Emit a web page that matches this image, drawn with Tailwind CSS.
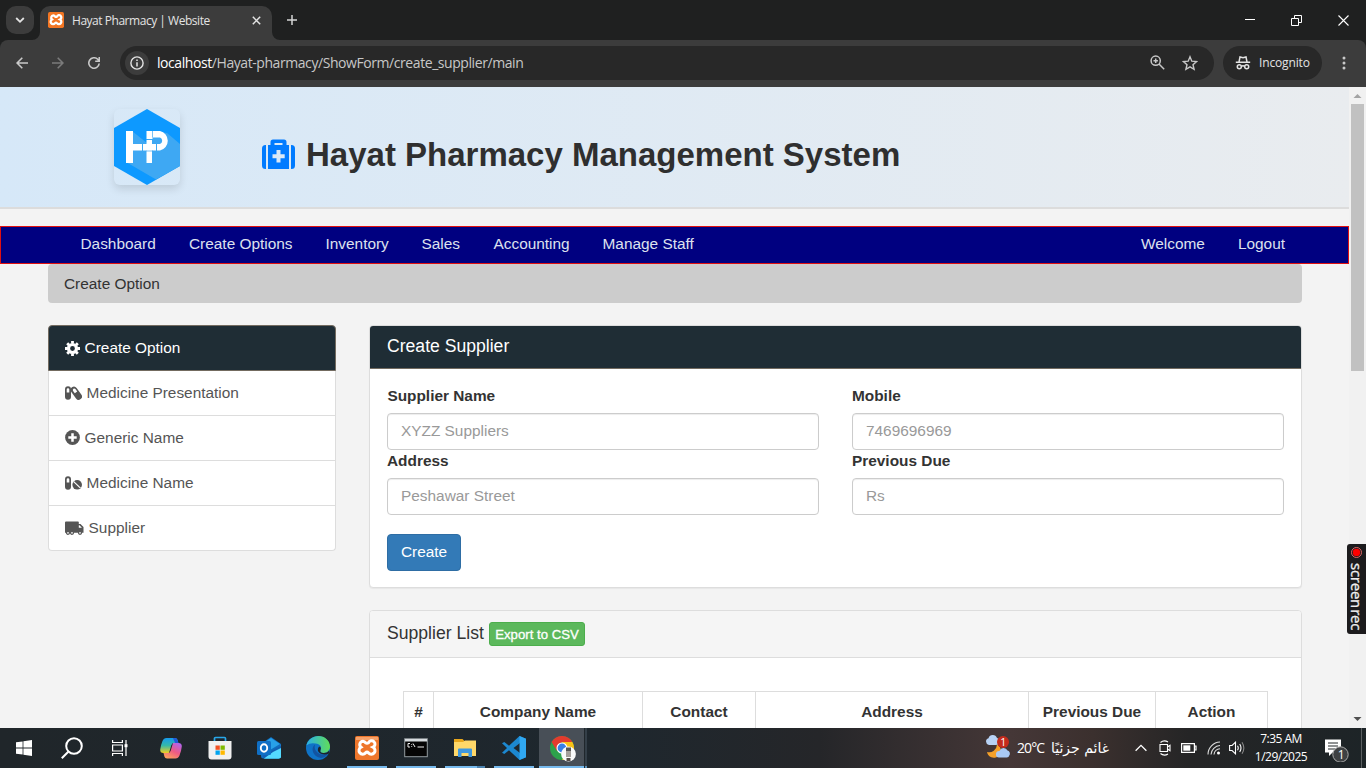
<!DOCTYPE html>
<html lang="en">
<head>
<meta charset="utf-8">
<title>Hayat Pharmacy | Website</title>
<script src="https://cdn.jsdelivr.net/npm/@tailwindcss/browser@4"></script>
</head>
<body class="w-[1366px] h-[768px] overflow-hidden flex flex-col bg-[#f3f3f3] font-['Liberation_Sans',Arial,sans-serif] text-[15.4px] leading-[22px] text-[#333]">

<!-- Tab strip -->
<div class="h-10 shrink-0 flex bg-[#1f2020] font-['Open_Sans','Noto_Sans',sans-serif]">
  <div class="w-7 h-7 mt-1.5 ml-1.5 rounded-[10px] bg-[#3c3c3c] flex items-center justify-center">
    <svg width="10" height="8" viewBox="0 0 10 8" fill="none" stroke="#e3e3e3" stroke-width="1.8"><path d="M1.2 2l3.8 3.8L8.8 2"/></svg>
  </div>
  <div class="relative ml-1.5 mt-1.5 w-[232px] h-[34px] rounded-t-[10px] bg-[#3c3c3c] flex items-center">
    <svg class="absolute -left-2 bottom-0" width="8" height="8"><path d="M8 0v8H0a8 8 0 0 0 8-8" fill="#3c3c3c"/></svg>
    <svg class="absolute -right-2 bottom-0" width="8" height="8"><path d="M0 0v8h8a8 8 0 0 1-8-8" fill="#3c3c3c"/></svg>
    <svg class="ml-2 mb-1.5" width="16" height="16" viewBox="0 0 24 24"><rect width="24" height="24" rx="2.5" fill="#f37623"/><path d="M8 5.200a3.400 3.400 0 0 0-2 6 3.700 3.700 0 1 0 4.500 5.700q1.500-1.500 3 0a3.700 3.700 0 1 0 4.500-5.700 3.400 3.400 0 1 0-4.500-4.500q-1.500 1-3 0A3.400 3.400 0 0 0 8 5.200z" fill="none" stroke="#fff" stroke-width="3.400"/></svg>
    <span class="ml-2 mb-[5px] w-[172px] whitespace-nowrap text-[12px] tracking-[-0.47px] text-[#e3e3e3]">Hayat Pharmacy | Website</span>
    <svg class="ml-[7.500px] mb-1.5" width="9" height="9" viewBox="0 0 9 9" stroke="#e3e3e3" stroke-width="1.500"><path d="M.8.8l7.400 7.400M8.200.8L.8 8.200"/></svg>
  </div>
  <svg class="ml-[15px] mt-[15px]" width="10" height="10" stroke="#d5d5d5" stroke-width="1.500"><path d="M5 0v10M0 5h10"/></svg>
  <div class="ml-auto flex items-center gap-[36px] pr-[17px]">
    <svg width="10" height="10" stroke="#fff"><path d="M0 4.500h10"/></svg>
    <svg width="11" height="11" fill="none" stroke="#fff"><path d="M.5 3.500h7v7h-7zM3.500 3.500V.5h7v7h-3"/></svg>
    <svg width="11" height="11" stroke="#fff" stroke-width="1.100"><path d="M.5.5l10 10M10.500.5l-10 10"/></svg>
  </div>
</div>

<!-- Toolbar -->
<div class="h-[47px] shrink-0 bg-[#1f2020]">
<div class="h-full rounded-t-lg bg-[#3c3c3c] flex items-center pl-4 pb-px font-['Open_Sans','Noto_Sans',sans-serif]">
  <svg width="12" height="12" viewBox="0 0 12 12" fill="none" stroke="#c9c9c9" stroke-width="1.600"><path d="M12 6H1.200M6.300.8L1.100 6l5.200 5.200"/></svg>
  <svg class="ml-6" width="12" height="12" viewBox="0 0 12 12" fill="none" stroke="#7b7b7b" stroke-width="1.600"><path d="M0 6h10.800M5.700.8L10.900 6l-5.200 5.200"/></svg>
  <svg class="ml-6" width="12" height="12" viewBox="0 0 12 12" fill="none" stroke="#c9c9c9" stroke-width="1.600"><path d="M11.200 6.500a5.200 5.200 0 1 1-1.500-4.200L11.200 4M11.300 0v4.200H7.200"/></svg>
  <div class="ml-5 w-[1094px] h-[34px] rounded-full bg-[#282828] flex items-center pl-[5px]">
    <div class="w-6 h-6 rounded-full bg-[#3c3c3c] flex items-center justify-center"><svg width="14" height="14" viewBox="0 0 14 14"><circle cx="7" cy="7" r="6.100" fill="none" stroke="#e3e3e3" stroke-width="1.400"/><path d="M6.250 6.200h1.500v4.300h-1.500zM6.250 3.600h1.500v1.500h-1.500z" fill="#e3e3e3"/></svg></div>
    <span class="ml-2 mb-px whitespace-nowrap text-[14px] tracking-[-0.43px] text-[#c7c7c7]"><span class="text-white">localhost</span>/Hayat-pharmacy/ShowForm/create_supplier/main</span>
    <svg class="ml-auto mb-px" width="15" height="15" viewBox="0 0 15 15" fill="none" stroke="#c7c7c7" stroke-width="1.500"><circle cx="5.700" cy="5.700" r="4.600"/><path d="M9 9l5.200 5.200M5.700 3.500v4.400M3.500 5.700h4.400"/></svg>
    <svg class="ml-[17px] mr-4 mb-px" width="16" height="16" viewBox="0 0 16 16" fill="none" stroke="#c7c7c7" stroke-width="1.400"><path d="M8 1.800l1.800 4.400 4.800.4-3.600 3.100 1.100 4.700L8 11.900l-4.100 2.500L5 9.700 1.400 6.600l4.800-.4z"/></svg>
  </div>
  <div class="ml-[9px] w-[99px] h-[34px] rounded-full bg-[#282828] flex items-center pl-3">
    <svg width="16" height="16" viewBox="0 0 16 16" fill="none" stroke="#e3e3e3" stroke-width="1.500"><path d="M.8 7.300h14.400M4 7l1-5 3 .8 3-.8 1 5"/><circle cx="4.300" cy="11.700" r="2"/><circle cx="11.700" cy="11.700" r="2"/><path d="M6.300 11.300q1.700-1 3.400 0"/></svg>
    <span class="ml-[8px] text-[12px] tracking-[-0.15px] text-[#e3e3e3]">Incognito</span>
  </div>
  <svg class="ml-5" width="4" height="16" fill="#c9c9c9"><circle cx="2" cy="3" r="1.500"/><circle cx="2" cy="8" r="1.500"/><circle cx="2" cy="13" r="1.500"/></svg>
</div>
</div>

<!-- Viewport -->
<div class="h-[641px] shrink-0 flex overflow-hidden relative">
  <main class="w-[1349px] h-full overflow-hidden bg-[#f3f3f3]">
    <header class="h-[122px] border-b-2 border-[#dcdcdc] bg-linear-to-r from-[#d6e8f8] to-[#e9ecef] flex">
      <div class="ml-[114px] mt-[22px] w-[66px] h-[76px] rounded-md shadow-[0_4px_9px_rgba(0,0,0,0.12)]">
        <svg width="66" height="76" viewBox="0 0 66 76"><path d="M33 0l33 19v38L33 76 0 57V19z" fill="#0d99ff"/><path d="M18 22l15 12 5-12 15 2 13 11v22L42 70.500 12 53z" fill="#3ea8f3"/><g fill="#fff"><path d="M12 22h7v13h9v6.500h-9V54h-7z"/><path d="M29 35h3.500v-4H38v4h4v6.500h-4V54h-5.500V41.500H29z"/><path d="M32.500 22H46a10 10 0 0 1 0 19.500h-3V35h3a3.500 3.500 0 0 0 0-6.500h-7.500V30h-6z"/></g><path d="M32 30.500h7M32 42h7M38.500 22v6.500" stroke="#3ea8f3" stroke-width=".7" fill="none"/></svg>
      </div>
      <div class="ml-[82px] mt-[46px] flex h-[44px] items-center">
        <svg class="-mt-[2px]" width="33" height="30" viewBox="0 0 33 30"><g fill="#007bff"><path d="M4 6v24H3.500A3.500 3.500 0 0 1 0 26.500v-17A3.500 3.500 0 0 1 3.500 6z"/><path d="M29 6v24h.5a3.500 3.500 0 0 0 3.500-3.500v-17A3.500 3.500 0 0 0 29.500 6z"/><path fill-rule="evenodd" d="M6 6h2.500V3A2.500 2.500 0 0 1 11 .5h11A2.500 2.500 0 0 1 24.500 3v3H27v24H6zM12.500 4v2h8V4zM14.500 11v4.200h-4v4h4v4.300h4v-4.300h4.200v-4h-4.200V11z"/></g></svg>
        <h1 class="ml-[11px] whitespace-nowrap text-[33px] font-bold leading-[44px] text-[#2f2f2f]">Hayat Pharmacy Management System</h1>
      </div>
    </header>

    <nav class="mt-[17px] h-[38px] border border-[#e01010] bg-[#000080] flex items-center pl-[79.500px] pr-[63px] pb-[3px] text-[#dde0ee] whitespace-nowrap">
      <a class="w-[108.500px]">Dashboard</a><a class="w-[136.500px]">Create Options</a><a class="w-[96px]">Inventory</a><a class="w-[72px]">Sales</a><a class="w-[109px]">Accounting</a><a>Manage Staff</a>
      <a class="ml-auto">Welcome</a><a class="ml-[33px]">Logout</a>
    </nav>

    <div class="ml-12 w-[1254px] h-[39px] rounded bg-[#ccc] px-4 flex items-center">Create Option</div>

    <div class="ml-12 mt-[22px] flex items-start">
      <aside class="w-72 mr-[33px] rounded text-[#555]">
        <div class="h-[46px] border border-[#736b60] rounded-t bg-[#1f2d35] px-4 flex items-center text-white">
          <svg width="15" height="15" viewBox="0 0 15 15"><circle cx="7.500" cy="7.500" r="4" fill="none" stroke="#fff" stroke-width="3.200"/><g stroke="#fff" stroke-width="2.800"><path d="M7.500 0v2.500M7.500 12.500V15M0 7.500h2.500M12.500 7.500H15M2.200 2.200l1.700 1.700M11.100 11.100l1.700 1.700M2.200 12.800l1.700-1.700M11.100 3.900l1.700-1.700"/></g></svg>
          <span class="ml-[4.600px]">Create Option</span>
        </div>
        <div class="h-[45px] border-x border-b border-[#ddd] bg-white px-4 flex items-center">
          <svg width="17" height="14" viewBox="0 0 17 14"><path fill-rule="evenodd" fill="#555" d="M3 .3a3 3 0 0 1 3 3v7.400a3 3 0 0 1-6 0V3.300a3 3 0 0 1 3-3zM1.700 3.500v3h2.600v-3a1.300 1.300 0 0 0-2.600 0z"/><path fill-rule="evenodd" fill="#555" d="M6.900 1.300a3.300 3.300 0 0 1 4.700.8l4.700 6.300a3.300 3.300 0 0 1-5.300 4L6.300 6a3.300 3.300 0 0 1 .6-4.700zM8.100 4.900l1.700 2.300 2.400-1.700-1.800-2.400c-1.200-1.400-3.200.1-2.300 1.800z"/></svg>
          <span class="ml-[4.600px]">Medicine Presentation</span>
        </div>
        <div class="h-[45px] border-x border-b border-[#ddd] bg-white px-4 flex items-center">
          <svg class="mb-px" width="15" height="15" viewBox="0 0 15 15"><circle cx="7.500" cy="7.500" r="7.400" fill="#555"/><path d="M7.500 3.300v8.400M3.300 7.500h8.400" stroke="#fff" stroke-width="2.500"/></svg>
          <span class="ml-[4.600px]">Generic Name</span>
        </div>
        <div class="h-[45px] border-x border-b border-[#ddd] bg-white px-4 flex items-center">
          <svg width="17" height="14" viewBox="0 0 17 14"><path fill-rule="evenodd" fill="#555" d="M3 .3a3 3 0 0 1 3 3v7.400a3 3 0 0 1-6 0V3.300a3 3 0 0 1 3-3zM1.700 3.500v3h2.600v-3a1.300 1.300 0 0 0-2.600 0z"/><circle cx="12.200" cy="8.800" r="4.800" fill="#555"/><path d="M8.700 5.600l6.800 6.500" stroke="#fff" stroke-width="1.200"/></svg>
          <span class="ml-[4.600px]">Medicine Name</span>
        </div>
        <div class="h-[45px] border-x border-b border-[#ddd] rounded-b bg-white px-4 flex items-center">
          <svg width="19" height="14" viewBox="0 0 19 14"><path fill-rule="evenodd" fill="#555" d="M1 .5h12a.8.8 0 0 1 .8.800V3h1.700l3 3v5.800H0V1.500q0-1 1-1zM13.800 4.200v2.600h3.100l-2.400-2.600z"/><g fill="#fff" stroke="#555" stroke-width="1.300"><circle cx="3" cy="11.800" r="1.500"/><circle cx="7" cy="11.800" r="1.500"/><circle cx="15" cy="11.800" r="1.500"/></g></svg>
          <span class="ml-[4.600px]">Supplier</span>
        </div>
      </aside>

      <section class="w-[933px]">
        <div class="h-[263px] border border-[#ddd] rounded bg-white shadow-[0_1px_1px_rgba(0,0,0,0.05)]">
          <div class="h-[43px] rounded-t-[3px] border-b border-[#736b60] bg-[#1f2d35] px-[17px] pb-[2px] flex items-center text-[17.600px] text-white">Create Supplier</div>
          <form class="px-[17px] pt-4 grid grid-cols-[432px_432px] gap-x-[33px]">
            <label class="flex flex-col font-bold"><span class="h-7 pl-[0.4px]">Supplier Name</span><input class="h-[37px] border border-[#ccc] rounded px-[13px] pb-px bg-white font-normal placeholder:text-[#999] shadow-[inset_0_1px_1px_rgba(0,0,0,0.075)]" placeholder="XYZZ Suppliers"></label>
            <label class="flex flex-col font-bold"><span class="h-7">Mobile</span><input class="h-[37px] border border-[#ccc] rounded px-[13px] pb-px bg-white font-normal placeholder:text-[#999] shadow-[inset_0_1px_1px_rgba(0,0,0,0.075)]" placeholder="7469696969"></label>
            <label class="flex flex-col font-bold"><span class="h-7">Address</span><input class="h-[37px] border border-[#ccc] rounded px-[13px] pb-px bg-white font-normal placeholder:text-[#999] shadow-[inset_0_1px_1px_rgba(0,0,0,0.075)]" placeholder="Peshawar Street"></label>
            <label class="flex flex-col font-bold"><span class="h-7">Previous Due</span><input class="h-[37px] border border-[#ccc] rounded px-[13px] pb-px bg-white font-normal placeholder:text-[#999] shadow-[inset_0_1px_1px_rgba(0,0,0,0.075)]" placeholder="Rs"></label>
            <button type="button" class="mt-[19px] w-[74px] h-[37px] rounded border border-[#2e6da4] bg-[#337ab7] pb-px text-white">Create</button>
          </form>
        </div>

        <div class="mt-[22px] h-[300px] border border-[#ddd] rounded bg-white">
          <div class="h-[47px] rounded-t-[3px] border-b border-[#ddd] bg-[#f5f5f5] px-[17px] flex items-center text-[17.600px]"><span class="mb-[3px] w-[102px] whitespace-nowrap">Supplier List</span><span class="w-24 h-6 rounded-[3px] border border-[#4cae4c] bg-[#5cb85c] text-white text-[13.200px] leading-[23px] text-center whitespace-nowrap [-webkit-text-stroke:0.3px_white]">Export to CSV</span></div>
          <table class="ml-[33px] mt-[33px] w-[865px] table-fixed border-collapse text-center">
            <tr class="h-[41px]">
              <th class="border border-[#ddd] w-[30px]">#</th><th class="border border-[#ddd] w-[209px]">Company Name</th><th class="border border-[#ddd] w-[113px]">Contact</th><th class="border border-[#ddd] w-[273px]">Address</th><th class="border border-[#ddd] w-[127px] whitespace-nowrap">Previous Due</th><th class="border border-[#ddd] w-[112px]">Action</th>
            </tr>
          </table>
        </div>
      </section>
    </div>
  </main>

  <!-- Scrollbar -->
  <div class="w-[17px] h-full bg-[#f1f1f1] flex flex-col items-center">
    <svg width="17" height="17"><path d="M4.500 11h8L8.500 7z" fill="#a3a3a3"/></svg>
    <div class="w-[13px] h-[267px] bg-[#c1c1c1]"></div>
    <svg class="mt-auto" width="17" height="17"><path d="M4.500 6h8l-4 4z" fill="#505050"/></svg>
  </div>

  <!-- Recorder badge -->
  <div class="absolute left-[1347px] top-[457px] w-[19px] h-[90px] rounded-l-[3px] bg-[#1c1b1d] flex flex-col items-center">
    <svg class="mt-[3px] shrink-0" width="11" height="11"><circle cx="5.500" cy="5.500" r="5" fill="none" stroke="#d66"/><circle cx="5.500" cy="5.500" r="3.700" fill="#f00"/></svg>
    <span class="mt-[5px] [writing-mode:vertical-rl] font-['Open_Sans',sans-serif] text-[15px] leading-[18px] tracking-[-0.25px] [word-spacing:-2.500px] whitespace-nowrap text-[#eee] [-webkit-text-stroke:0.3px_#eee]">screen rec</span>
  </div>
</div>

<!-- Taskbar -->
<div class="h-10 shrink-0 flex bg-[linear-gradient(90deg,#20262a_0,#1e272e_45%,#252629_60%,#453737_74%,#3b302e_80%,#252526_87%,#1d2427_100%)] text-white font-['Open_Sans','Noto_Sans',sans-serif]">
  <div class="w-12 flex items-center justify-center"><svg width="16" height="16" viewBox="0 0 16 16" fill="#fff"><path d="M0 2.300l6.600-.9v6.200H0zM7.400 1.300L16 0v7.600H7.400zM0 8.400h6.600v6.200L0 13.700zM7.400 8.400H16V16l-8.600-1.200z"/></svg></div>
  <div class="w-12 flex items-center justify-center"><svg width="22" height="22" viewBox="0 0 22 22" fill="none" stroke="#fff" stroke-width="2"><circle cx="13" cy="9" r="7.800"/><path d="M7.300 14.700L.8 21.300"/></svg></div>
  <div class="w-12 flex items-center justify-center"><svg width="16" height="16" viewBox="0 0 16 16" fill="none" stroke="#fff" stroke-width="1.200"><path d="M.6 0v2.500h9.800V0M.6 5h9.800v6H.6zM.6 16v-2.500h9.800V16M14 0v16"/><path d="M12.500 4.200h3v3h-3z" fill="#fff" stroke="none"/></svg></div>
  <div class="w-[2.500px]"></div>
  <div class="w-[49px] flex items-center justify-center">
    <svg width="24" height="22" viewBox="0 0 24 22"><defs><linearGradient id="ca" x1="0" y1="0" x2="0" y2="1"><stop offset="0" stop-color="#169bee"/><stop offset=".5" stop-color="#35b9a8"/><stop offset="1" stop-color="#f2cf20"/></linearGradient><linearGradient id="cb" x1=".8" y1="0" x2=".2" y2="1"><stop offset="0" stop-color="#b264ec"/><stop offset=".5" stop-color="#ee5a83"/><stop offset="1" stop-color="#ffa55a"/></linearGradient></defs><path d="M7.500 1H16q2 0 2.600 2l.8 3H15q-2 0-2.700 2.300L10 16H4.500Q1 16 1.200 12.500q.4-4 2.300-8.500Q4.700 1 7.500 1z" fill="url(#ca)"/><path d="M14 1h2q2 0 2.600 2l.9 3.500h-3.200z" fill="#2357d8"/><path d="M16.500 21.500H8q-2 0-2.600-2l-.9-3.500H9q2 0 2.700-2.300L14 6h5.500q3.500 0 3.300 3.500-.4 4-2.300 9-1.200 3-4 3z" fill="url(#cb)"/></svg>
  </div>
  <div class="w-[49px] flex items-center justify-center">
    <svg width="24" height="24" viewBox="0 0 24 24"><path d="M6.500 6V2.500q0-1 1-1h9q1 0 1 1V6" fill="none" stroke="#28a8ea" stroke-width="1.700"/><path d="M.5 5h23v15.500q0 3-3 3h-17q-3 0-3-3z" fill="#f0f0f0"/><path d="M7.500 9.500h4.300v4.300H7.500z" fill="#f25022"/><path d="M12.500 9.500h4.300v4.300h-4.300z" fill="#7fba00"/><path d="M7.500 14.500h4.300v4.300H7.500z" fill="#00a4ef"/><path d="M12.500 14.500h4.300v4.300h-4.300z" fill="#ffb900"/></svg>
  </div>
  <div class="w-[49px] flex items-center justify-center">
    <svg width="24" height="24" viewBox="0 0 24 24"><path d="M4 8l10-7 10 7v12q0 2.500-2.500 2.500h-15Q4 22.500 4 20z" fill="#0f6cbd"/><path d="M5 8l9-6 9 6-10 6z" fill="#28a0e8"/><path d="M24 9v11q0 2.500-2.500 2.500H7z" fill="#45d1fa"/><path d="M24 9l-14 9-4-3v5q0 2.500 2 2.500L24 13z" fill="#1260b5"/><path d="M24 12v8.500q0 2-2.500 2H7l9-6.500z" fill="#54daff"/><rect x="0" y="5" width="14" height="14" rx="1.500" fill="#0f6fc5"/><ellipse cx="7" cy="12" rx="3.200" ry="3.700" fill="none" stroke="#fff" stroke-width="1.900"/></svg>
  </div>
  <div class="w-[49px] flex items-center justify-center">
    <svg width="24" height="24" viewBox="0 0 24 24"><defs><linearGradient id="ea"><stop offset="0" stop-color="#2ab0e8"/><stop offset="1" stop-color="#60dc58"/></linearGradient></defs><circle cx="12" cy="12" r="12" fill="#0f73c7"/><path d="M.3 9.500C2 3.500 7 0 12.500 0 19 0 24 5 24 10.500c0 4-3 6.500-6.500 6.500-3 0-4-1.500-3-3 1.800-2.500-.5-6.500-5-6.500Q4 6.500.3 9.500z" fill="url(#ea)"/><path d="M9 8.500C4 12 7 21 15 22q5-.5 7.500-5-6 3-10.500 0Q7.500 13.500 9 8.500z" fill="#1254a1"/><path d="M14.500 14q-1 3 3 3 4 0 5.500-2.500v3q-4 2-8 .3-4-1.800-3-5.300.5-2 2-2 1.600 1.500.5 3.500z" fill="#1e2429"/></svg>
  </div>
  <div class="w-[49px] flex flex-col items-center">
    <svg class="mt-2" width="24" height="24" viewBox="0 0 24 24"><rect width="24" height="24" rx="2" fill="#ee762b"/><path d="M1 1h22v3H1z" fill="#f7a26a"/><path d="M8 5.200a3.400 3.400 0 0 0-2 6 3.700 3.700 0 1 0 4.500 5.700q1.500-1.500 3 0a3.700 3.700 0 1 0 4.500-5.700 3.400 3.400 0 1 0-4.500-4.500q-1.500 1-3 0A3.400 3.400 0 0 0 8 5.200z" fill="none" stroke="#fff" stroke-width="3"/></svg>
    <div class="mt-auto w-10 h-0.5 bg-[#76b9ed]"></div>
  </div>
  <div class="w-[49px] flex flex-col items-center">
    <svg class="mt-[10px]" width="24" height="20" viewBox="0 0 24 20"><rect x=".7" y=".7" width="22.600" height="18" fill="#050505" stroke="#939b9f"/><path d="M1 1h22v2.500H1z" fill="#d7dcdf"/><path d="M6 5.500H4v3.500h2M7.700 6v.8M7.700 8v.8M9 5.500l2 3.500M13.500 9H20" stroke="#eee" fill="none"/></svg>
    <div class="mt-auto w-10 h-0.5 bg-[#76b9ed]"></div>
  </div>
  <div class="w-[49px] flex flex-col items-center">
    <svg class="mt-[10px]" width="22" height="20" viewBox="0 0 22 20"><path d="M0 1h8.500l2 2H22v15H0z" fill="#e9a71c"/><path d="M0 4h9l2-1.500h11V18H0z" fill="#ffd869"/><path d="M4 19v-7.500q0-1 1-1h12q1 0 1 1V19h-3.500v-4h-7v4z" fill="#3f98df"/></svg>
    <div class="mt-auto flex w-10 h-0.5"><div class="w-8 bg-[#76b9ed]"></div><div class="w-2 bg-[#4c83b0]"></div></div>
  </div>
  <div class="w-[49px] flex flex-col items-center">
    <svg class="mt-2" width="24" height="24" viewBox="0 0 24 24"><path d="M17.500 0L24 2.800v18.400L17.500 24 7 14.200 2.300 18 0 16.800 5 12 0 7.200 2.300 6 7 9.800zM18 7l-6.500 5 6.500 5z" fill="#1c88d0" fill-rule="evenodd"/><path d="M17.500 0L24 2.800v18.400L17.500 24z" fill="#30a8f2"/></svg>
    <div class="mt-auto w-10 h-0.5 bg-[#76b9ed]"></div>
  </div>
  <div class="w-[45.500px] flex flex-col items-center bg-[#484f57]">
    <svg class="mt-2 ml-[4px]" width="26" height="26" viewBox="0 0 26 26"><circle cx="12" cy="12" r="12" fill="#2da14b"/><path d="M1.600 6A12 12 0 0 1 22.400 6H12L7 15z" fill="#e33b2e"/><path d="M12 6h10.400A12 12 0 0 1 12 24l5-9z" fill="#fbc116"/><circle cx="12" cy="12" r="5.500" fill="#fff"/><circle cx="12" cy="12" r="4.400" fill="#397fe6"/><circle cx="18.500" cy="18" r="7.400" fill="#fafafa"/><path d="M16 11.500h5V16h-5z" fill="#555"/><path d="M16 15h5v6h-5z" fill="#a5a09b"/><path d="M16.500 22h4v3h-4z" fill="#544c48"/></svg>
    <div class="mt-auto w-full h-0.5 bg-[#76b9ed]"></div>
  </div>
  <div class="w-[3px] bg-[#343f48] border-l border-[#20272c] flex items-end"><div class="w-full h-0.5 bg-[#5c93bd]"></div></div>

  <!-- Tray -->
  <div class="ml-auto flex items-center whitespace-nowrap">
    <svg width="26" height="26" viewBox="0 0 26 26"><path d="M12 9.500a7 7 0 1 1-10 7.500 8 8 0 0 0 10-7.500z" fill="#f4a029"/><path d="M4 10a3.500 3.500 0 0 1-.5-6.800A4.500 4.500 0 0 1 12 3q3.500 1 2.500 4.500Q13.500 10 11 10z" fill="#b8d2f5"/><path d="M14 22.500a3.300 3.300 0 0 1 .5-6.600 4.300 4.300 0 0 1 8-.3q2.800.8 2.300 4-.8 2.900-3 2.900z" fill="#a9c9f4"/><circle cx="18" cy="7" r="6" fill="#c42b1c"/><text x="15.300" y="10.800" font-size="10.500" fill="#fff">1</text></svg>
    <span class="ml-[6px] w-[38px] text-[14px] tracking-[-0.9px]">20°C</span>
    <span dir="rtl" class="w-[54px] text-center text-[14px] font-['DejaVu_Sans',sans-serif]">غائم جزئيًا</span>
    <svg class="ml-[26px]" width="12" height="8" viewBox="0 0 12 8" fill="none" stroke="#fff" stroke-width="1.300"><path d="M.6 6.800L6 1.400l5.400 5.400"/></svg>
    <svg class="ml-[12px]" width="13" height="16" viewBox="0 0 13 16" fill="none" stroke="#fff" stroke-width="1.100"><path d="M1 4.500h7.500v7H1zM8.500 7L11 5.300v5.400L8.500 9M1.500 2.500q3.500-3 7.500-.5M1.500 13.500q3.500 3 7.500.5"/></svg>
    <svg class="ml-[9px]" width="16" height="10" viewBox="0 0 16 10"><path d="M.6.600h12.800v8.800H.6zM13.500 3h1.500v4h-1.500" fill="none" stroke="#fff" stroke-width="1.200"/><path d="M2.300 2.300h7v5.400h-7z" fill="#fff"/></svg>
    <svg class="ml-[10px]" width="14" height="14" viewBox="0 0 14 14" fill="none" stroke="#ddd" stroke-width="1.100"><path d="M1 13.500A12.500 12.500 0 0 1 13 1M4 13.500A9.500 9.500 0 0 1 13 4.500M7 13.500a6.500 6.500 0 0 1 6-5.800"/><circle cx="11.500" cy="12" r="1.500" fill="#fff" stroke="none"/></svg>
    <svg class="ml-[8px]" width="16" height="14" viewBox="0 0 16 14" fill="none" stroke="#fff" stroke-width="1.100"><path d="M.6 4.500h2.500L6.500 1.200v11.600L3.100 9.500H.6zM8.500 4.800q1.500 2.200 0 4.400M10.700 3q2.600 4 0 8"/><path d="M13 1.200q3.700 5.800 0 11.600" stroke="#888"/></svg>
    <div class="w-[62px] ml-[5px] flex flex-col items-center text-[12px] leading-[18px] tracking-[-0.5px]"><span>7:35 AM</span><span>1/29/2025</span></div>
    <svg class="ml-[11px]" width="28" height="28" viewBox="0 0 28 28"><path d="M2 5.500h16v13H9.500L6 22v-3.500H2z" fill="#fff"/><path d="M5 9h10M5 12h10M5 15h7" stroke="#22282a"/><circle cx="17.500" cy="20.500" r="7.700" fill="#3e4143" stroke="#aaa"/><text x="14.700" y="25" font-size="12" fill="#fff">1</text></svg>
    <div class="ml-[10px] w-px h-10 bg-[#5b5f61]"></div><div class="w-1"></div>
  </div>
</div>
</body>
</html>
